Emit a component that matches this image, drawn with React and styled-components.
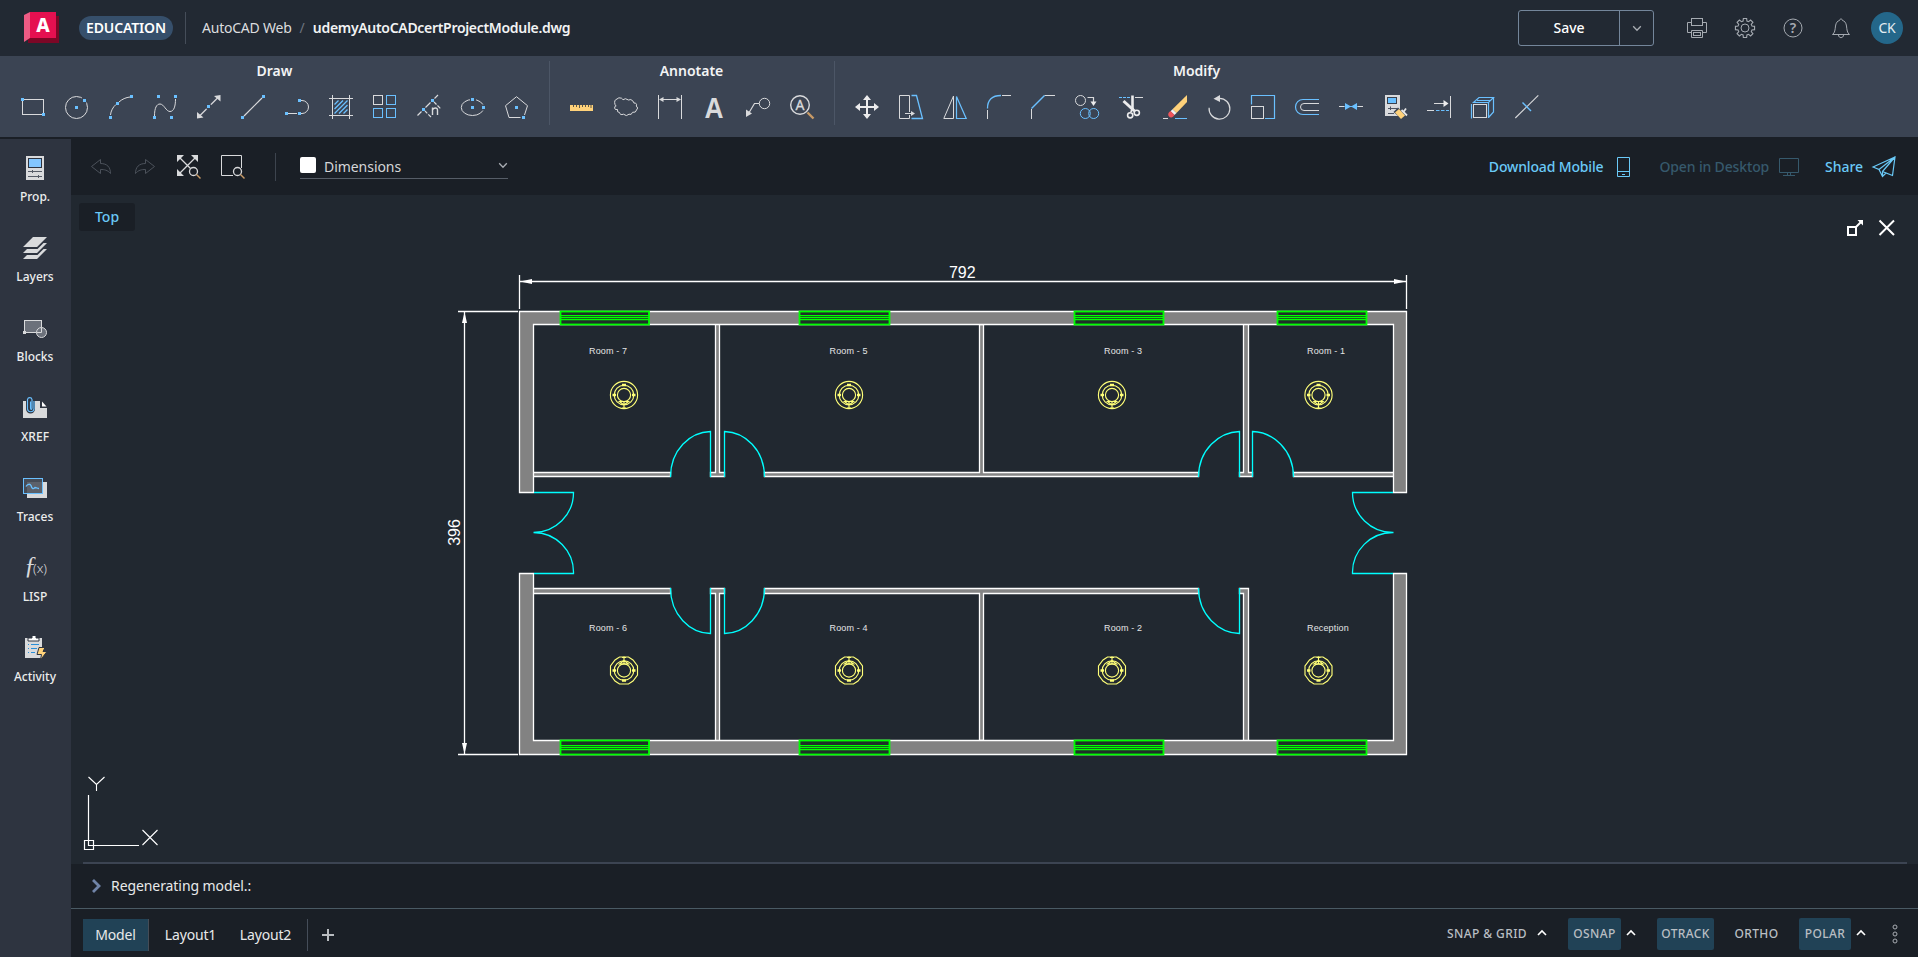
import React from 'react';
import styled, { createGlobalStyle } from 'styled-components';

const W = '#d9dadc';
const B = '#6ac0ff';
const Y = '#ffd27a';

const Global = createGlobalStyle`
  * { box-sizing: border-box; }
  html, body, #root { height: 100%; margin: 0; }
  body {
    background: #1a1f26;
    color: #e8e9ea;
    font-family: "Noto Sans", "Open Sans", sans-serif;
    font-size: 14px;
    line-height: 20px;
    overflow: hidden;
  }
  svg { display: block; flex: none; overflow: visible; }
`;

const Page = styled.div`
  display: flex;
  flex-direction: column;
  width: 100%;
  height: 957px;
`;

const Header = styled.header`
  display: flex;
  align-items: center;
  height: 56px;
  padding: 0 15px 0 24px;
  background: #222933;
`;

const Badge = styled.span`
  display: flex;
  align-items: center;
  justify-content: center;
  width: 94px;
  height: 24px;
  margin-left: 20px;
  border-radius: 12px;
  background: #364f6b;
  color: #fff;
  font-weight: 600;
  letter-spacing: -0.15px;
`;

const Rule = styled.i`
  width: 1px;
  height: ${(p) => p.$h}px;
  margin: ${(p) => p.$m || 0};
  background: ${(p) => p.$c || '#454d59'};
`;

const Crumb = styled.span`
  color: ${(p) => (p.$bold ? '#f2f3f4' : p.$dim ? '#6d747e' : '#dcdddf')};
  font-weight: ${(p) => (p.$bold ? 600 : 400)};
  letter-spacing: ${(p) => p.$ls || 0}px;
  margin-right: ${(p) => p.$gap || 0}px;
  white-space: nowrap;
`;

const Grow = styled.div`
  flex: 1;
`;

const SaveButton = styled.div`
  display: flex;
  width: 136px;
  height: 36px;
  border: 1px solid #74869b;
  border-radius: 3px;
  color: #fff;
  font-weight: 500;
`;

const SaveMain = styled.div`
  display: flex;
  align-items: center;
  justify-content: center;
  width: 101px;
  border-right: 1px solid #74869b;
`;

const SaveMore = styled.div`
  display: flex;
  align-items: center;
  justify-content: center;
  flex: 1;
`;

const HeaderIcons = styled.div`
  display: flex;
  gap: 24px;
  margin: 0 18px 0 31px;
`;

const Avatar = styled.div`
  display: flex;
  align-items: center;
  justify-content: center;
  width: 32px;
  height: 32px;
  border-radius: 50%;
  background: #24678a;
  color: #e4edf2;
  letter-spacing: -0.3px;
`;

const Ribbon = styled.div`
  display: flex;
  height: 81px;
  padding: 5px 0 0 1px;
  background: #3b4453;
`;

const RibbonGroup = styled.section`
  padding: 0 10px;
`;

const RibbonTitle = styled.h2`
  margin: 0;
  padding-right: 1px;
  font-size: 14px;
  font-weight: 600;
  line-height: 20px;
  text-align: center;
  color: #f3f4f5;
`;

const Tools = styled.div`
  display: flex;
`;

const Tool = styled.div`
  display: flex;
  align-items: center;
  justify-content: center;
  width: 44px;
  height: 52px;
`;

const Body = styled.div`
  display: flex;
  flex: 1;
  min-height: 0;
`;

const Sidebar = styled.nav`
  width: 71px;
  margin-top: 2px;
  padding-top: 17px;
  background: #2e3440;
`;

const SideItem = styled.div`
  display: flex;
  flex-direction: column;
  align-items: center;
  height: 80px;
  padding-right: 1px;
  font-size: 12px;
  font-weight: 500;
  line-height: 16px;
  gap: 9px;
  color: #eceded;
`;

const Main = styled.main`
  display: flex;
  flex-direction: column;
  flex: 1;
  min-width: 0;
`;

const Toolbar = styled.div`
  display: flex;
  align-items: center;
  height: 58px;
  padding: 2px 22px 0 18px;
  background: #1a1f26;
`;

const QuickTools = styled.div`
  display: flex;
  gap: 20px;
`;

const LayerSelect = styled.div`
  display: flex;
  align-items: center;
  width: 208px;
  height: 24px;
  padding-top: 1px;
  margin-top: -1px;
  border-bottom: 1px solid #565d67;
  color: #d5d6d8;
  letter-spacing: -0.05px;
`;

const Swatch = styled.i`
  width: 16px;
  height: 16px;
  margin: -3px 8px 0 0;
  border-radius: 2px;
  background: #fff;
`;

const SelectCaret = styled.div`
  margin: -3px -1px 0 0;
`;

const LinkButton = styled.div`
  display: flex;
  align-items: center;
  gap: ${(p) => p.$gap}px;
  margin-left: ${(p) => p.$ml || 0}px;
  color: ${(p) => (p.$off ? '#36596c' : '#6ac9f7')};
  font-weight: 500;
  letter-spacing: ${(p) => p.$ls || 0}px;
  white-space: nowrap;
`;

const Canvas = styled.div`
  position: relative;
  height: 669px;
  background: #212830;
`;

const ViewTag = styled.div`
  position: absolute;
  left: 8px;
  top: 8px;
  width: 56px;
  height: 28px;
  border-radius: 3px;
  background: #1a1f26;
  color: #6ac9f7;
  line-height: 28px;
  text-align: center;
  font-weight: 500;
`;

const WindowControls = styled.div`
  position: absolute;
  top: 24px;
  right: 23px;
  display: flex;
  gap: 14px;
`;

const CanvasEdge = styled.div`
  height: 2px;
  margin: 0 11px 0 12px;
  background: #3c4452;
`;

const CommandBar = styled.div`
  display: flex;
  align-items: center;
  height: 45px;
  padding-left: 21px;
  gap: 10px;
  border-bottom: 1px solid #4a5a64;
  letter-spacing: -0.08px;
`;

const StatusBar = styled.footer`
  display: flex;
  align-items: center;
  height: 48px;
  padding: 4px 17px 0 12px;
`;

const LayoutTab = styled.div`
  display: flex;
  align-items: center;
  justify-content: center;
  width: ${(p) => p.$w}px;
  height: 32px;
  padding-bottom: 1px;
  background: ${(p) => (p.$on ? '#214256' : 'transparent')};
  border-right: 1px solid ${(p) => (p.$edge ? '#454c56' : 'transparent')};
  letter-spacing: -0.15px;
`;

const Toggle = styled.div`
  display: flex;
  align-items: center;
  justify-content: center;
  width: ${(p) => p.$w}px;
  height: 32px;
  margin-left: ${(p) => p.$ml || 0}px;
  margin-top: -2px;
  border-radius: 2px;
  background: ${(p) => (p.$on ? '#214256' : 'transparent')};
  color: #b9bec3;
  font-size: 12px;
  font-weight: 500;
  letter-spacing: 0.4px;
  white-space: nowrap;
`;

const CaretBox = styled.div`
  width: 12px;
  margin: -4px ${(p) => p.$mr || 0}px 0 ${(p) => p.$ml || 4}px;
`;

/* ---------- icon helpers ---------- */

const Icon = ({ children, c = W, s = 24, w = 1 }) => (
  <svg width={s} height={s} viewBox={`0 0 ${s} ${s}`} fill="none" stroke={c} strokeWidth={w}>
    {children}
  </svg>
);

const Dot = ({ x, y }) => <rect x={x - 1.5} y={y - 1.5} width="3" height="3" fill={B} stroke="none" />;
const Fill = ({ d, c = W }) => <path d={d} fill={c} stroke="none" />;

const Caret = ({ up, c = '#a9adb3', w = 1.3, s = 12 }) => (
  <Icon s={s} c={c} w={w}>
    <path d={up ? 'M2 8l4-4 4 4' : 'M2.2 4.2l3.8 4 3.8-4'} />
  </Icon>
);

/* ---------- ribbon icons ---------- */

const drawIcons = [
  <><rect x="1.5" y="4.5" width="21" height="15" /><Dot x={1.5} y={4.5} /><Dot x={22.5} y={19.5} /></>,
  <g transform="translate(-.5 0)"><circle cx="12" cy="12.5" r="11" /><circle cx="19.5" cy="5.5" r="3" fill="#3b4453" stroke="none" /><Dot x={12} y={12.5} /><Dot x={20} y={5.5} /></g>,
  <><path d="M1.5 20C1.8 16 4 12 7 9.5M10 7C13 4.2 17 2.4 21 2" /><Dot x={1.5} y={22.5} /><Dot x={8.5} y={8.5} /><Dot x={22.5} y={1.5} /></>,
  <><path d="M1.5 21C1.5 13 3.5 9 7 9C11 9 13 16.5 17 16.5C21 16.5 22.5 11 22.5 4" /><Dot x={5.5} y={1.5} /><Dot x={22.5} y={1.5} /><Dot x={1.5} y={22.5} /><Dot x={18.5} y={22.5} /></>,
  <><path d="M3 20.5L20.500 3" strokeWidth="1.2" /><Fill d="M0 23.500V17L6.5 22.500zM23.500 0V6.500L17 1z" /><circle cx="12" cy="12" r="3" fill="#3b4453" stroke="none" /><Dot x={11.5} y={11.5} /></>,
  <><path d="M3 21L21 3" strokeWidth="1.2" /><Dot x={1.5} y={22.5} /><Dot x={22.5} y={1.5} /></>,
  <><path d="M3 18.5H12M16 18.5H17A6.5 6.5 0 0 0 17 5.5H16" /><Dot x={1.5} y={18.5} /><Dot x={14.5} y={18.5} /><Dot x={14.5} y={5.5} /></>,
  <><path d="M3.5 0V24M20.5 0V24M0 3.5H24M0 20.5H24" /><path d="M5.5 9.5L9.5 5.5M5.5 14L14 5.5M5.5 18.5L18.5 5.5M10 18.5L18.5 10M14.5 18.5L18.5 14.5" stroke={B} strokeWidth="1.3" /></>,
  <><rect x=".5" y=".5" width="9" height="9" /><g stroke={B}><rect x="13.5" y=".5" width="9" height="9" /><rect x=".5" y="13.5" width="9" height="9" /><rect x="13.5" y="13.5" width="9" height="9" /></g></>,
  <><path d="M.5 20.5L4.5 16.5M8.5 12.5L13.5 7.5M17.5 3.5L21 0M17 7L19.5 9.5M20.5 10.5L23.3 13.3M8 16L10.3 18.3M11.3 19.3L14 22" strokeWidth="1.2" /><path d="M15.5 20V12.5M15.5 15C16 12.5 20.5 12 20.5 15V20" strokeWidth="1.4" /><Dot x={15.5} y={5.5} /><Dot x={6.5} y={14.5} /></>,
  <g transform="translate(-.5 0)"><ellipse cx="12" cy="12.5" rx="11.2" ry="8" /><path d="M9.5 4.5H15.5M23.2 9.5V15.5" stroke="#3b4453" strokeWidth="3" /><Dot x={12} y={12.5} /><Dot x={12} y={4.5} /><Dot x={23} y={12.5} /></g>,
  <g transform="translate(-.5 0)"><path d="M16 22.5H4.5L1 10.7L12 1.7L23 10.7L20 20" /><Dot x={12} y={12.5} /><Dot x={19} y={22.5} /></g>,
];

const annotateIcons = [
  <><rect y="10" width="23" height="6" fill={Y} stroke="none" /><path d="M3.5 10V12M6.5 10V12M9.5 10V13M12.5 10V12M15.5 10V12M18.5 10V12M21 10V13" stroke="#5b5648" /></>,
  <path d="M1 9.500Q-.3 5 3 4Q4.500 2 7.500 3.200Q8.500 3.800 9 4.800Q11 2.500 14.500 5Q17 3.500 19 6.200Q20 7 19.800 8Q23.500 8 22.300 11Q25 13 22.500 15Q22 18 18.500 17.300Q17.500 20.500 15 19.200Q12.500 22 9.500 19.200Q6 20.500 5.500 17.500Q2.800 17.500 3.500 14.500Q0 15 .8 12Q1.200 10.800 2.200 10.800Q1 10.500 1 9.500z" />,
  <><path d="M.5 0V24M23.500 0V24M3 4.500H21" /><Fill d="M1 4.500L5.500 2V7zM23 4.500L18.500 2V7z" /></>,
  <text x="12" y="23" textAnchor="middle" fontFamily="Liberation Sans, sans-serif" fontWeight="700" fontSize="29" textLength="19" lengthAdjust="spacingAndGlyphs" fill={W} stroke="none">A</text>,
  <><path d="M2.500 18.500L8.500 8.500H13" strokeWidth="1.2" /><circle cx="18.500" cy="8.500" r="5.2" /><Fill d="M0 22V14.500L6 18.500z" /></>,
  <><circle cx="10" cy="10" r="9.3" strokeWidth="1.4" /><text x="10" y="15" textAnchor="middle" fontFamily="Noto Sans, sans-serif" fontSize="14" fill={W} stroke={W} strokeWidth=".3">A</text><path d="M17.500 17.500L23.500 23.500" stroke="#c79a66" strokeWidth="2.4" /></>,
];

const modifyIcons = [
  <Fill c="#ececed" d="M11 5H8L12 0L16 5H13V11H19V8L24 12L19 16V13H13V19H16L12 24L8 19H11V13H5V16L0 12L5 8V11H11z" />,
  <><path d="M10.500 17V.5H.5V23.500H10.500V20" /><path d="M12.500 .5H17.500L23.500 23.500H12.500" stroke={B} strokeWidth="1.3" /><path d="M6 18.500H13" /><Fill d="M12 16L16 18.500L12 21z" /></>,
  <><path d="M.8 23.500H10.500V1z" /><path d="M13.500 1.500V23.500H23.200z" stroke={B} strokeWidth="1.2" /></>,
  <><path d="M.5 15V24M15 .5H24" /><path d="M.5 13.500C.5 5 5 .5 14 .5" stroke={B} strokeWidth="1.3" /></>,
  <><path d="M.5 14V24M13.500 .5H24" /><path d="M.5 13.500L13.500 .5" stroke={B} strokeWidth="1.4" /></>,
  <><circle cx="5.5" cy="5.500" r="5" /><g stroke={B}><circle cx="10.300" cy="18.500" r="5" /><circle cx="18.700" cy="18.500" r="5" /></g><path d="M12.500 2.500H18.500V7" strokeWidth="1.2" /><Fill c="#ececed" d="M15.500 6.500H21.500L18.500 11z" /></>,
  <><path d="M0 2.500H11" stroke={B} strokeDasharray="3 1" /><path d="M16 2.500H24" /><path d="M13.500 .5V14.500" strokeWidth="2.6" stroke="#ececed" /><path d="M4.500 6L15.500 16" strokeWidth="3" stroke="#ececed" /><path d="M13.500 13L12 17" strokeWidth="2" stroke="#ececed" /><circle cx="11.200" cy="20.300" r="2.600" strokeWidth="1.6" stroke="#ececed" /><circle cx="17.800" cy="17.800" r="2.600" strokeWidth="1.600" stroke="#ececed" /></>,
  <><path d="M0 23.500H5" /><path d="M12 23.500H24" stroke={B} /><Fill c={Y} d="M24 0V7L13.500 18L9.500 14.200z" /><Fill c="#f3f3f3" d="M9.500 14.200L13.500 18L11.500 20L7.500 16.200z" /><Fill c="#f0555b" d="M7.500 16L11.500 20C10 22.800 7.500 23 6 21.500C4.500 20 5 17.500 7.500 16z" /></>,
  <g transform="translate(1 0)"><path d="M1.100 12.800A10.400 10.400 0 1 0 11.500 3.300" strokeWidth="1.2" /><Fill d="M5.500 3.700L12 0V7z" /></g>,
  <><path d="M.5 9.500V.5H23.500V23.500H14" stroke={B} strokeWidth="1.2" /><rect x=".5" y="11.500" width="12" height="12" /></>,
  <><path d="M24 4.500H8A7.500 7.500 0 0 0 8 19.500H24" stroke={B} strokeWidth="1.2" /><path d="M24 8.500H9A3.500 3.500 0 0 0 9 15.500H24" /></>,
  <><path d="M0 11.500H5.500M18.500 11.500H24" /><path d="M5.500 11.500H18.500" stroke={B} /><Fill c={B} d="M6 8L12 11.500L6 15zM18 8L12 11.500L18 15z" /></>,
  <><rect x="2" width="15" height="21" fill={W} stroke="none" /><rect x="4.500" y="2.500" width="9" height="6" fill={B} stroke="#39414e" /><path d="M5 13.500H14M5 18.500H11M7.500 11.500V15" stroke="#4c5361" /><path d="M10.500 17L15 12.500L25 22L20.500 25.500z" fill="#3b4453" stroke="none" /><Fill c={Y} d="M12 17.500L16 14L22 20.500L18 24z" /><path d="M18.500 15L24 20.500M20.500 17L23 13.500" strokeWidth="1.800" stroke="#e6e6e6" /></>,
  <><path d="M23.500 1V23M7 8.500H18M0 15.500H7" /><path d="M9 15.500H22" stroke={B} strokeDasharray="3.500 1.500" /><Fill c="#ececed" d="M16.500 5L21.500 8.500L16.500 12z" /></>,
  <><rect x="2.500" y="9.500" width="13" height="13" /><g stroke={B} strokeWidth="1.200"><path d="M.5 9V23.500M2.500 7.500L8 2.500H22.500L17.500 7.500zM17.500 7.500V23M22.500 2.500V17L17.500 22.500M6 5.500H19.500" /></g></>,
  <><path d="M.3 23L23.300 .3" strokeWidth="1.100" /><path d="M7.500 7.500L16 16" stroke={B} strokeWidth="1.400" /></>,
];

const groups = [
  { name: 'Draw', icons: drawIcons },
  { name: 'Annotate', icons: annotateIcons },
  { name: 'Modify', icons: modifyIcons },
];

/* ---------- side bar icons ---------- */

const sideItems = [
  ['Prop.', <><rect x="3" width="18" height="24" fill={W} stroke="none" /><rect x="5.500" y="2.500" width="13" height="9" fill="#83c6ff" stroke="#2e3440" /><path d="M5 15.500H19M5 20.500H19M9.500 14V17M15.500 19V22" stroke="#555b66" /></>],
  ['Layers', <Fill d="M10 1H24L14 11H0zM4 13H14.500L20.500 7H24L14 17H0zM4 19H14.500L20.500 13H24L14 23H0z" />],
  ['Blocks', <><rect x="1.500" y="4.500" width="17" height="12" fill="#6c717b" /><circle cx="18.500" cy="16.500" r="5" fill="#6c717b" /><path d="M18.500 12V16.500H14" /><rect y="15" width="3" height="3" fill={W} stroke="none" /></>],
  ['XREF', <><path d="M0 5H17V12H24V22H0z" fill={W} stroke="none" /><path d="M19 5.500L23.500 10.500H19z" fill="#fff" stroke="none" /><path d="M4.500 13V4A3 3 0 0 1 10.500 4V13A3 3 0 0 1 4.500 13z" stroke="#2e3440" strokeWidth="3" fill="#2e3440" /><path d="M7.500 5.500V12C7.500 13.800 9 13.800 9 12V3.500A2.300 2.300 0 0 0 4.500 3.500V13A3.300 3.300 0 0 0 11 13V5" stroke={B} strokeWidth="1.200" /></>],
  ['Traces', <><path d="M20 6H24V22H4V18H20z" fill={W} stroke="none" /><rect x=".5" y="2.500" width="19" height="15" fill="#464c57" stroke={B} /><rect x="4" y="6" width="15" height="11" fill="#5c616b" stroke="none" /><path d="M3 10.500C4.500 8 7 7.500 8 9.500C8.800 12.500 10 13.500 12 11.500C13.500 11.500 14.500 12.500 16 12.500" stroke={B} strokeWidth="1.300" /></>],
  ['LISP', <><text x="1" y="17.500" fontFamily="Liberation Serif, serif" fontStyle="italic" fontSize="25" fill={W} stroke="none">ƒ</text><text x="10" y="17.300" fontFamily="Noto Sans, sans-serif" fontSize="13" fontWeight="300" textLength="14" lengthAdjust="spacingAndGlyphs" fill={W} stroke="none">(x)</text></>],
  ['Activity', <><rect x="2" y="2" width="17" height="20" fill={W} stroke="none" /><path d="M5 5V2H9V-.5H13V2H16V5z" fill="#fff" stroke="#2e3440" /><path d="M5 8.500H6M8 8.500H16M5 12.500H6M8 12.500H14M5 16.500H6M8 16.500H12" stroke="#2a8fd8" /><path d="M16 11.500H22L20 15.500H24L17.500 24L18.500 18.500H14z" fill={Y} stroke="#2e3440" /></>],
];

/* ---------- header icons ---------- */

const gearPath = (() => {
  const pts = [];
  for (let i = 0; i < 8; i++) {
    const a = (i * Math.PI) / 4;
    [[-0.27, 7.2], [-0.17, 9.7], [0.17, 9.7], [0.27, 7.2]].forEach(([d, r]) => {
      pts.push(`${(10 + r * Math.sin(a + d)).toFixed(2)} ${(10 - r * Math.cos(a + d)).toFixed(2)}`);
    });
  }
  return `M${pts.join('L')}z`;
})();

const H = '#a5aab1';
const headerIcons = [
  <><path d="M4.500 14.500H.5V4.500H4.500M15.500 4.500H19.500V14.500H15.500" /><rect x="4.500" y=".5" width="11" height="7" /><path d="M4.500 12.500H15.500V19.500H4.500z" /><rect x="6.500" y="14.500" width="7" height="3" /></>,
  <><path d={gearPath} strokeWidth="1.100" /><circle cx="10" cy="10" r="4" /></>,
  <><circle cx="10" cy="10" r="9" /><text x="10" y="15" textAnchor="middle" fontFamily="Noto Sans, sans-serif" fontSize="14" fontWeight="600" fill={H} stroke="none">?</text></>,
  <><path d="M1.500 16.500C4 14.500 4 12 4.500 8C5 4.500 6.500 3 8.500 2.500C8.500 .5 11.500 .5 11.500 2.500C13.500 3 15 4.500 15.500 8C16 12 16 14.500 18.500 16.500zM7.500 17C7.500 20.500 12.500 20.500 12.500 17" /></>,
];

const Logo = () => (
  <svg width="35" height="32" viewBox="0 0 35 32">
    <path d="M4 4H35V31H4z" fill="#7c0726" />
    <path d="M0 3L6 0V26L0 30z" fill="#ee5b84" />
    <path d="M6 0H32V26H6z" fill="#e51050" />
    <text x="19" y="19.500" textAnchor="middle" fontFamily="Noto Sans, sans-serif" fontWeight="800" fontSize="19" fill="#fff">A</text>
  </svg>
);

/* ---------- floor plan ---------- */

const windowXs = [[560.5, 649], [799.5, 889.5], [1074.5, 1163.5], [1277.5, 1366.5]];
const lampXs = [624, 849, 1112, 1318.5];
const rooms = [
  ['Room - 7', 589, 354], ['Room - 5', 829.5, 354], ['Room - 3', 1104, 354], ['Room - 1', 1307, 354],
  ['Room - 6', 589, 631], ['Room - 4', 829.5, 631], ['Room - 2', 1104, 631], ['Reception', 1307, 631],
];

const WindowUnit = ({ x1, x2, y, h, lines }) => (
  <g stroke="#00ff00">
    <rect x={x1} y={y} width={x2 - x1} height={h} fill="#1e3028" strokeWidth="1.8" />
    {lines.map((l) => <path key={l} d={`M${x1} ${l}H${x2}`} strokeWidth="1.25" />)}
  </g>
);

const Lamp = ({ x, y, flip }) => (
  <g transform={`translate(${x} ${y}) scale(1 ${flip ? -1 : 1})`} stroke="#ffff78" fill="none" strokeWidth="1.15">
    {flip
      ? <path d="M-13.500 -4.500L-9 -10.500L-4.500 -13.500H4.500L9 -10.500L13.500 -4.500V4.500L9 10.500L4.500 13.500H-4.500L-9 10.500L-13.500 4.500z" />
      : <circle r="13.600" />}
    <circle r="9.800" />
    <circle r="6.600" />
    <path d="M-4.500 6.500H4.500L0 10zM0 7V14M-2 13H2" />
    <path d="M-11.500 0H-8M8 0H11.500M-2 -10H2" strokeWidth="2.400" />
  </g>
);

const Plan = () => (
  <svg width="1847" height="667" viewBox="71 195 1847 667" fill="none" fontFamily="Liberation Sans, Arial, sans-serif">
    {/* dimensions */}
    <g stroke="#fff" strokeWidth="1.300">
      <path d="M519.500 275V309M1406.500 275V309M519.500 281.500H1406.500M458 311.500H518M458 754.500H518M464.500 311.500V754.500" />
    </g>
    <path fill="#fff" d="M520 281.500L532 279V284zM1406 281.500L1394 279V284zM464.500 312L462 323H467zM464.500 754L462 743H467z" />
    <text x="962.300" y="277.700" textAnchor="middle" fontSize="16" fill="#fff">792</text>
    <text transform="translate(460 532.500) rotate(-90)" textAnchor="middle" fontSize="16" fill="#fff">396</text>

    {/* partitions */}
    <g fill="#858585" stroke="#fff" strokeWidth="1.300">
      <path d="M533.500 472.500H670.500V476.500H533.500M533.500 588.500H670.500V593.500H533.500" />
      <path d="M715.500 324.500V472.500H710.500V476.500H724.500V472.500H719.500V324.500M715.500 740.500V593.500H710.500V588.500H724.500V593.500H719.500V740.500" />
      <path d="M764.500 472.500H979.500V324.500H983.500V472.500H1198.500V476.500H764.500zM764.500 588.500H1198.500V593.500H983.500V740.500H979.500V593.500H764.500z" />
      <path d="M1243.500 324.500V472.500H1239.500V476.500H1252.500V472.500H1248.500V324.500M1243.500 740.500V593.500H1239.500V588.500H1248.500V740.500" />
      <path d="M1393.500 472.500H1293.500V476.500H1393.500" />
    </g>

    {/* outer walls */}
    <g fill="#828282" stroke="#fff" strokeWidth="1.300">
      <path d="M519.500 492.500V311.500H1406.500V492.500H1393.500V324.500H533.500V492.500z" />
      <path d="M519.500 573.500V754.500H1406.500V573.500H1393.500V740.500H533.500V573.500z" />
    </g>

    {windowXs.map(([a, b]) => (
      <React.Fragment key={a}>
        <WindowUnit x1={a} x2={b} y={311.5} h={13} lines={[315.5, 317.5, 319.5]} />
        <WindowUnit x1={a} x2={b} y={740.5} h={14} lines={[745.5, 747.5, 749.5]} />
      </React.Fragment>
    ))}

    {/* doors */}
    <g stroke="#00ffff" strokeWidth="1.300">
      <path d="M710.500 477V431.500C690 432 670.500 450 670.500 477M724.500 477V431.500C745 432 764.500 450 764.500 477" />
      <path d="M1239.500 477V431.500C1219 432 1198.500 450 1198.500 477M1252.500 477V431.500C1273 432 1293.500 450 1293.500 477" />
      <path d="M710.500 588V633.500C690 633 670.500 615 670.500 588M724.500 588V633.500C745 633 764.500 615 764.500 588" />
      <path d="M1239.500 588V633.500C1219 633 1198.500 615 1198.500 588" />
      <path d="M534 492.500H573.500A40 40 0 0 1 533.500 532.500A40 40 0 0 1 573.500 573.500H534" />
      <path d="M1393 492.500H1352.500A40.500 40 0 0 0 1393.500 532.500A40.500 40 0 0 0 1352.500 573.500H1393" />
    </g>

    {lampXs.map((x) => (
      <React.Fragment key={x}>
        <Lamp x={x} y={395} />
        <Lamp x={x} y={670.500} flip />
      </React.Fragment>
    ))}

    {rooms.map(([t, x, y]) => (
      <text key={t} x={x} y={y} fontSize="9" letterSpacing=".15" fill="#e4e5e6">{t}</text>
    ))}

    {/* coordinate axes */}
    <g stroke="#fff" strokeWidth="1.200">
      <path d="M88.500 795V845.500H139M84.500 840.500H93.500V849.500H84.500z" />
      <path d="M88.500 777L96.500 784.500L104.500 777M96.500 784.500V791M142.500 830L157.500 845M157.500 830L142.500 845" strokeWidth="1.100" />
    </g>
  </svg>
);

export default function App() {
  return (
    <Page>
      <Global />
      <Header>
        <Logo />
        <Badge>EDUCATION</Badge>
        <Rule $h={32} $m="0 16px 0 12px" />
        <Crumb $ls={-0.22} $gap={8}>AutoCAD Web</Crumb>
        <Crumb $dim $gap={8}>/</Crumb>
        <Crumb $bold $ls={-0.31}>udemyAutoCADcertProjectModule.dwg</Crumb>
        <Grow />
        <SaveButton>
          <SaveMain>Save</SaveMain>
          <SaveMore><Caret /></SaveMore>
        </SaveButton>
        <HeaderIcons>
          {headerIcons.map((ic, i) => (
            <svg key={i} width="24" height="20" viewBox="-2 0 24 20" fill="none" stroke={H}>{ic}</svg>
          ))}
        </HeaderIcons>
        <Avatar>CK</Avatar>
      </Header>

      <Ribbon>
        {groups.map((g, i) => (
          <React.Fragment key={g.name}>
            {i > 0 && <Rule $h={64} $c="#4c5666" />}
            <RibbonGroup>
              <RibbonTitle>{g.name}</RibbonTitle>
              <Tools>
                {g.icons.map((ic, k) => <Tool key={k}><Icon>{ic}</Icon></Tool>)}
              </Tools>
            </RibbonGroup>
          </React.Fragment>
        ))}
      </Ribbon>

      <Body>
        <Sidebar>
          {sideItems.map(([label, ic]) => (
            <SideItem key={label}><Icon>{ic}</Icon>{label}</SideItem>
          ))}
        </Sidebar>

        <Main>
          <Toolbar>
            <QuickTools>
              <Icon c="#4c525b"><path d="M2.500 11.500L11.500 4.500V8.500C18 8.500 21.500 12 21.500 18.500C18.500 15 15.500 14.500 11.500 14.500V18.500z" /></Icon>
              <Icon c="#4c525b"><path d="M21.500 11.500L12.500 4.500V8.500C6 8.500 2.500 12 2.500 18.500C5.500 15 8.500 14.500 12.500 14.500V18.500z" /></Icon>
              <Icon>
                <path d="M2 2L13.500 13.500M18 3L3 18" strokeWidth="1.300" />
                <Fill d="M0 0H7L0 7zM21 0V7L14 0zM0 21V14L7 21z" />
                <circle cx="16.500" cy="16.500" r="4" strokeWidth="1.300" />
                <path d="M19.500 19.500L23.500 23.500" stroke="#c79a66" strokeWidth="1.500" />
              </Icon>
              <Icon>
                <path d="M12 20.500H.5V.5H20.500V13" />
                <circle cx="16.500" cy="16.500" r="4" strokeWidth="1.300" />
                <path d="M19.500 19.500L23.500 23.500" stroke="#c79a66" strokeWidth="1.500" />
              </Icon>
            </QuickTools>
            <Rule $h={28} $m="0 24px 0 30px" $c="#3d444e" />
            <LayerSelect>
              <Swatch />
              Dimensions
              <Grow />
              <SelectCaret><Caret /></SelectCaret>
            </LayerSelect>
            <Grow />
            <LinkButton $gap={13} $ls={-0.15}>
              Download Mobile
              <svg width="14" height="20" viewBox="0 0 14 20" fill="none" stroke="#6ac9f7"><path d="M.5 .5H12.500V19.500H.5zM.5 14.500H12.500M5 17.500H8" /></svg>
            </LinkButton>
            <LinkButton $off $gap={10} $ml={29} $ls={-0.15}>
              Open in Desktop
              <svg width="20" height="18" viewBox="0 0 20 18" fill="none" stroke="#36596c"><path d="M.5 .5H19.500V14.500H.5zM4 17.500H16M8.500 14.500V17.500M11.500 14.500V17.500" /></svg>
            </LinkButton>
            <LinkButton $gap={9} $ml={26} $ls={-0.05}>
              Share
              <svg width="24" height="22" viewBox="0 0 24 22" fill="none" stroke="#6ac9f7" strokeWidth="1.200"><path d="M1 11L23 1L20.500 19.500L14 17L10.500 20.500L7 13.500zM7 13.500L23 1L10.500 15.500V20.500M10.500 15.500L14 17M10.500 15.500L23 1" /></svg>
            </LinkButton>
          </Toolbar>

          <Canvas>
            <Plan />
            <CanvasEdge />
            <ViewTag>Top</ViewTag>
            <WindowControls>
              <Icon s={17} c="#fff" w={2}>
                <rect x="1" y="8" width="8" height="8" />
                <path d="M9 8L14 3" />
                <path d="M10.500 1H16V6.500z" fill="#fff" stroke="none" />
              </Icon>
              <Icon s={17} c="#fff" w={2}><path d="M1.500 1.500L16 16M16 1.500L1.500 16" /></Icon>
            </WindowControls>
          </Canvas>

          <CommandBar>
            <svg width="9" height="14" viewBox="0 0 9 14" fill="none" stroke="#7084a8" strokeWidth="2.800"><path d="M1 1L7 7L1 13" /></svg>
            Regenerating model.:
          </CommandBar>

          <StatusBar>
            <LayoutTab $on $edge $w={66}>Model</LayoutTab>
            <LayoutTab $w={84}>Layout1</LayoutTab>
            <LayoutTab $w={66}>Layout2</LayoutTab>
            <Rule $h={32} $m="0 14px 0 8px" />
            <Icon s={12} w={2} c="#b9bcc0"><path d="M6 0V12M0 6H12" /></Icon>
            <Grow />
            <Toggle $w={82}>SNAP &amp; GRID</Toggle>
            <CaretBox $ml={8}><Caret up c="#fff" w={1.6} /></CaretBox>
            <Toggle $on $w={53} $ml={20}>OSNAP</Toggle>
            <CaretBox><Caret up c="#fff" w={1.6} /></CaretBox>
            <Toggle $on $w={57} $ml={20}>OTRACK</Toggle>
            <Toggle $w={43} $ml={21}>ORTHO</Toggle>
            <Toggle $on $w={52} $ml={21}>POLAR</Toggle>
            <CaretBox $mr={22}><Caret up c="#fff" w={1.6} /></CaretBox>
            <svg width="12" height="24" viewBox="0 0 12 24" fill="none" stroke="#a9adb3">
              <circle cx="6" cy="4" r="2" /><circle cx="6" cy="11" r="2" /><circle cx="6" cy="18" r="2" />
            </svg>
          </StatusBar>
        </Main>
      </Body>
    </Page>
  );
}
